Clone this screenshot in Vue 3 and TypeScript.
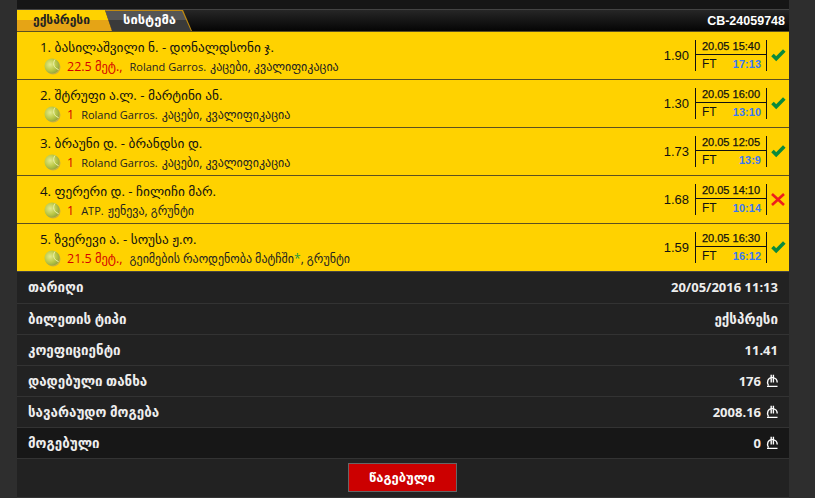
<template>
  <div class="page">
    <div class="panel">
      <div class="topbar"></div>
      <div class="tabbar">
        <div class="tabs">
          <div class="tab tab--active">ექსპრესი</div>
          <div class="tab tab--system">სისტემა</div>
        </div>
        <div class="code">CB-24059748</div>
      </div>
      <div class="bets">
        <div v-for="(bet, i) in bets" :key="i" class="bet">
          <div class="bet__main">
            <div class="bet__title">{{ i + 1 }}. {{ bet.title }}</div>
            <div class="bet__sub">
              <svg class="ball" width="17" height="17" viewBox="0 0 17 17">
                <defs>
                  <radialGradient :id="`ball${i}`" cx="0.38" cy="0.4" r="0.65">
                    <stop offset="0" stop-color="#e4ea8c" />
                    <stop offset="0.6" stop-color="#bcc948" />
                    <stop offset="1" stop-color="#93a63e" />
                  </radialGradient>
                </defs>
                <circle cx="9" cy="9" r="7.5" fill="#c9b040" />
                <circle cx="8" cy="8" r="7.5" :fill="`url(#ball${i})`" />
                <path d="M11 1.5C8.5 5 9.5 10 14.5 11.5" fill="none" stroke="#eef2b0" stroke-width="1" />
              </svg>
              <span class="bet__stake">{{ bet.stake }}</span>
              <span v-if="bet.tour" class="bet__tour">{{ bet.tour }}</span>
              <span class="bet__league">{{ bet.league }}<span v-if="bet.star" class="star">*</span>{{ bet.suffix }}</span>
            </div>
          </div>
          <div class="bet__odd">{{ bet.odd }}</div>
          <div class="bet__time">
            <div class="bet__date">{{ bet.date }}</div>
            <div class="bet__result">
              <span class="ft">FT</span>
              <span class="score">{{ bet.score }}</span>
            </div>
          </div>
          <div class="bet__status">
            <svg v-if="bet.won" width="15" height="13" viewBox="0 0 15 13">
              <path d="M1.5 6L5.2 9.7L13.3 1.5" fill="none" stroke="#0a8a3c" stroke-width="3.6" />
            </svg>
            <svg v-else width="14" height="13" viewBox="0 0 14 13">
              <path d="M1 1L13 12M13 1L1 12" fill="none" stroke="#ee1c1c" stroke-width="2.6" />
            </svg>
          </div>
        </div>
      </div>
      <div class="info">
        <div v-for="row in rows" :key="row.label" class="info__row" :class="{ 'info__row--dark': row.dark }">
          <span>{{ row.label }}</span>
          <span class="info__value" :class="{ 'info__value--geo': row.geo }">
            {{ row.value }}
            <svg v-if="row.money" class="lari" width="12" height="14" viewBox="0 0 12 14">
              <path d="M2.5 11.5C0.3 8 2 3.6 6 3.6S11.2 6.5 11.2 8.5M5.2 0.8V8.5M7.4 0.8V8.5M1 12.4H11.5" fill="none" stroke="#fff" stroke-width="1.4" />
            </svg>
          </span>
        </div>
      </div>
      <div class="footer">
        <button class="lost">წაგებული</button>
      </div>
    </div>
  </div>
</template>

<script setup lang="ts">
interface Bet {
  title: string
  stake: string
  tour?: string
  league: string
  star?: boolean
  suffix?: string
  odd: string
  date: string
  score: string
  won: boolean
}

const bets: Bet[] = [
  { title: 'ბასილაშვილი ნ. - დონალდსონი ჯ.', stake: '22.5 მეტ.,', tour: 'Roland Garros.', league: 'კაცები, კვალიფიკაცია', odd: '1.90', date: '20.05 15:40', score: '17:13', won: true },
  { title: 'შტრუფი ა.ლ. - მარტინი ან.', stake: '1', tour: 'Roland Garros.', league: 'კაცები, კვალიფიკაცია', odd: '1.30', date: '20.05 16:00', score: '13:10', won: true },
  { title: 'ბრაუნი დ. - ბრანდსი დ.', stake: '1', tour: 'Roland Garros.', league: 'კაცები, კვალიფიკაცია', odd: '1.73', date: '20.05 12:05', score: '13:9', won: true },
  { title: 'ფერერი დ. - ჩილიჩი მარ.', stake: '1', tour: 'ATP.', league: 'ჟენევა, გრუნტი', odd: '1.68', date: '20.05 14:10', score: '10:14', won: false },
  { title: 'ზვერევი ა. - სოუსა ჟ.ო.', stake: '21.5 მეტ.,', league: 'გეიმების რაოდენობა მატჩში', star: true, suffix: ', გრუნტი', odd: '1.59', date: '20.05 16:30', score: '16:12', won: true }
]

const rows = [
  { label: 'თარიღი', value: '20/05/2016 11:13' },
  { label: 'ბილეთის ტიპი', value: 'ექსპრესი', geo: true },
  { label: 'კოეფიციენტი', value: '11.41' },
  { label: 'დადებული თანხა', value: '176', money: true },
  { label: 'სავარაუდო მოგება', value: '2008.16', money: true },
  { label: 'მოგებული', value: '0', money: true, dark: true }
]
</script>

<style scoped>
.page {
  width: 815px;
  height: 498px;
  overflow: hidden;
  background: #2e2e2e;
  font-family: "Open Sans", "DejaVu Sans", sans-serif;
}
.panel {
  width: 772px;
  margin-left: 17px;
  height: 497px;
  background: #222;
  border-bottom: 1px solid #333;
}
.topbar {
  height: 9px;
  background: #161616;
  border-bottom: 1px solid #444;
}
.tabbar {
  height: 21px;
  display: flex;
  justify-content: space-between;
  align-items: center;
  background: linear-gradient(#262626, #050505);
}
.tabs {
  display: flex;
  height: 21px;
}
.tab {
  font-family: "DejaVu Sans", sans-serif;
  font-weight: bold;
  line-height: 20px;
}
.tab--active {
  width: 95px;
  padding-left: 16px;
  box-sizing: border-box;
  font-size: 12px;
  color: #222;
  background: linear-gradient(#ffd200 50%, #e5a416 50%);
  clip-path: polygon(0 0, 88px 0, 95px 100%, 0 100%);
}
.tab--system {
  position: relative;
  width: 88px;
  margin-left: -7px;
  padding-left: 18px;
  box-sizing: border-box;
  font-size: 13px;
  color: #fff;
  background: #c08a10;
  clip-path: polygon(0 0, 78px 0, 87px 100%, 7px 100%);
}
.tab--system::before {
  content: "";
  position: absolute;
  inset: 0;
  z-index: -1;
  background: linear-gradient(#555 50%, #3a3a3a 50%);
  clip-path: polygon(0 1px, 77px 1px, 86px 100%, 7px 100%);
}
.code {
  font-family: "Liberation Sans", sans-serif;
  font-size: 12.5px;
  font-weight: bold;
  color: #fff;
  padding-right: 4px;
}
.bets {
  background: #ffd200;
}
.bet {
  height: 47px;
  display: flex;
  align-items: center;
  border-top: 1px solid #5c5020;
  color: #111;
}
.bet__main {
  flex: 1;
  padding-left: 23px;
  padding-top: 3px;
}
.bet__title {
  font-size: 13.3px;
  line-height: 16px;
}
.bet__sub {
  display: flex;
  align-items: center;
  margin-top: 3px;
  margin-left: 4px;
  height: 17px;
}
.ball {
  margin-right: 6px;
}
.bet__stake {
  font-size: 12.5px;
  color: #d40000;
  margin-right: 7px;
}
.bet__tour {
  font-size: 11px;
  color: #222;
  margin-right: 4px;
}
.bet__league {
  font-size: 12px;
  color: #222;
}
.star {
  color: #1a9a40;
}
.bet__odd {
  font-family: "Liberation Sans", sans-serif;
  font-size: 13px;
  margin-right: 6px;
}
.bet__time {
  width: 70px;
  height: 31px;
  border-left: 1px solid #111;
  border-right: 1px solid #111;
  font-family: "Liberation Sans", sans-serif;
  font-size: 11px;
}
.bet__date {
  height: 14px;
  line-height: 12px;
  text-align: center;
  border-bottom: 1px solid #111;
  -webkit-text-stroke: 0.25px #111;
}
.bet__result {
  display: flex;
  justify-content: space-between;
  padding: 2px 5px 0 6px;
  line-height: 14px;
}
.ft {
  font-size: 12px;
}
.score {
  color: #3a78f2;
  font-weight: bold;
}
.bet__status {
  width: 22px;
  display: flex;
  justify-content: center;
}
.info {
  border-top: 1px solid #444;
}
.info__row {
  height: 30px;
  display: flex;
  justify-content: space-between;
  align-items: center;
  padding: 0 11px;
  border-bottom: 1px solid #333;
  font-size: 13.4px;
  font-weight: bold;
  color: #eee;
}
.info__row:first-child {
  height: 29px;
  padding-bottom: 2px;
}
.info__row--dark {
  background: #171717;
}
.info__value {
  display: flex;
  align-items: center;
  gap: 5px;
  font-size: 13px;
}
.info__value--geo {
  font-size: 13.4px;
}
.footer {
  display: flex;
  justify-content: center;
  padding: 4px 2px 0 0;
}
.lost {
  width: 109px;
  height: 29px;
  background: #cc0000;
  border: 1px solid #666;
  color: #fff;
  font-family: "DejaVu Sans", sans-serif;
  font-size: 13px;
  font-weight: bold;
}
</style>
